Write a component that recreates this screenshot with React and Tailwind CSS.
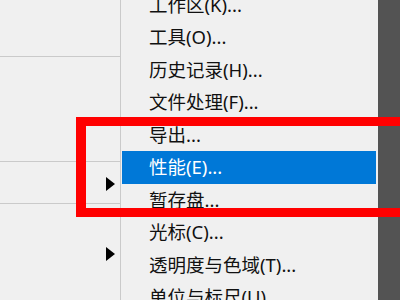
const ITEMS = [
  "工作区(K)...",
  "工具(O)...",
  "历史记录(H)...",
  "文件处理(F)...",
  "导出...",
  "性能(E)...",
  "暂存盘...",
  "光标(C)...",
  "透明度与色域(T)...",
  "单位与标尺(U)...",
];

const Arrow = () => (
  <div className="w-0 h-0 border-y-[7px] border-y-transparent border-l-[9px] border-l-black" />
);

const App = () => {
  return (
    <div
      className="relative w-[400px] h-[300px] overflow-hidden flex bg-[#f0f0f0]"
      style={{ fontFamily: '"Noto Sans", "Noto Sans CJK SC", sans-serif' }}
    >
      {/* left panel */}
      <div className="w-[121px] shrink-0 border-r border-[#cacaca] flex flex-col">
        <div className="h-[57px] border-b border-[#cacaca]" />
        <div className="h-[105px] border-b border-[#cacaca]" />
        <div className="h-[42px] border-b border-[#cacaca] flex items-center justify-end pr-[5px] pt-[2px]">
          <Arrow />
        </div>
        <div className="flex-1 flex justify-end pr-[5px] pt-[43px]">
          <Arrow />
        </div>
      </div>

      {/* menu */}
      <div className="flex-1 flex flex-col -mt-[11.5px] pl-[1px] pr-[2px]">
        {ITEMS.map((item, i) => (
          <div
            key={i}
            className={
              "h-[32.5px] shrink-0 flex items-center pl-[27px] text-[18.5px] leading-none " +
              (i === 5 ? "bg-[#0078d7] text-white" : "text-[#111]")
            }
          >
            {item}
          </div>
        ))}
      </div>

      <div className="w-[22px] shrink-0 bg-[#535353]" />

      {/* red annotation box */}
      <div className="absolute left-[76px] top-[117px] w-[340px] h-[100px] border-[#ff0000] border-l-[10px] border-y-[9px]" />
    </div>
  );
};

export default App;
